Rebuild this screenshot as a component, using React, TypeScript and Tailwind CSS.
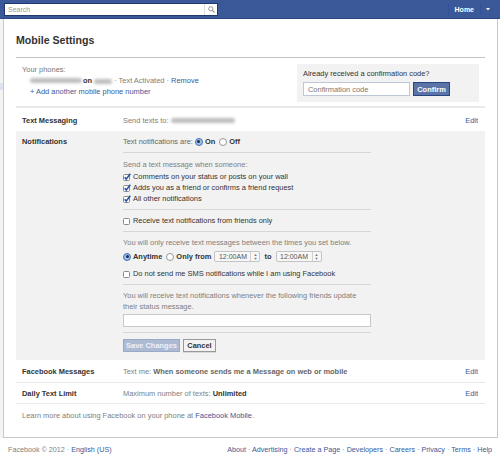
import { ReactNode } from 'react';

function Check({ checked = false }: { checked?: boolean }) {
  return (
    <svg width="8" height="8" viewBox="0 0 8 8" className="mr-[2px] shrink-0">
      <rect x="0.5" y="1.5" width="6" height="6" rx="1" fill="#fff" stroke="#8a8a8a" />
      {checked && <path d="M1.7 4.3 L3.2 6.1 L7.3 0.7" stroke="#1f4f9e" strokeWidth="1.5" fill="none" />}
    </svg>
  );
}

function Radio({ on = false }: { on?: boolean }) {
  return on ? (
    <span className="mr-[2px] flex h-[8px] w-[8px] shrink-0 items-center justify-center rounded-full border border-[#4a6fa8] bg-[#9cc0ee]">
      <span className="h-[3px] w-[3px] rounded-full bg-[#1a2c4f]" />
    </span>
  ) : (
    <span className="mr-[2px] h-[8px] w-[8px] shrink-0 rounded-full border border-[#999] bg-white" />
  );
}

// blurred-out personal info
function Blur({ w }: { w: number }) {
  return <span className="inline-block h-[5px] rounded-full bg-[#bdbdbd] align-middle blur-[1.5px]" style={{ width: w }} />;
}

function TimeSelect() {
  return (
    <span className="flex h-[11px] w-[46px] items-center rounded-[2px] border border-[#c4c4c4] bg-[#f7f7f7] text-[7px] text-[#555]">
      <span className="flex-1 text-center">12:00AM</span>
      <span className="flex h-full w-[9px] flex-col items-center justify-center border-l border-[#d0d0d0] text-[4px] leading-[4px] text-[#777]">
        <span>▲</span>
        <span>▼</span>
      </span>
    </span>
  );
}

function Row({ label, children, edit = true }: { label: string; children: ReactNode; edit?: boolean }) {
  return (
    <div className="flex pl-[6px] pr-[7px]">
      <div className="w-[101px] shrink-0 font-bold text-[#333]">{label}</div>
      <div className="flex-1 text-[#808080]">{children}</div>
      {edit && <a className="text-[#3b5998]">Edit</a>}
    </div>
  );
}

const Hr = ({ className = '' }: { className?: string }) => <div className={`h-px w-[248px] bg-[#d6d6d6] ${className}`} />;

const Dot = () => <span className="text-[#808080]">·</span>;

export default function App() {
  return (
    <div className="flex h-[459px] w-[500px] flex-col overflow-hidden bg-white font-['Liberation_Sans',Arial,sans-serif] text-[7.45px] leading-[11px] text-[#333]">
      {/* top bar */}
      <div className="flex h-[19px] shrink-0 items-center border-b border-[#2b4788] bg-[#3b5998] pl-[4px] pr-[7px]">
        <div className="flex h-[13px] w-[214px] items-center border border-[#20386e] bg-white">
          <span className="flex-1 pl-[3px] text-[7px] text-[#999]">Search</span>
          <span className="flex h-full w-[13px] items-center justify-center border-l border-[#ddd]">
            <svg width="7" height="7" viewBox="0 0 8 8">
              <circle cx="3.2" cy="3.2" r="2.4" fill="none" stroke="#888" strokeWidth="1" />
              <path d="M5 5 L7.4 7.4" stroke="#888" strokeWidth="1.2" />
            </svg>
          </span>
        </div>
        <div className="flex-1" />
        <span className="h-[11px] w-px bg-[#32509a]" />
        <span className="px-[6px] text-[7px] font-bold text-white">Home</span>
        <span className="h-[11px] w-px bg-[#32509a]" />
        <svg width="10" height="6" viewBox="0 0 10 6" className="ml-[2px]">
          <path d="M3 2 L7 2 L5 4.5 Z" fill="#fff" />
        </svg>
      </div>

      <div className="flex">
        {/* left strip */}
        <div className="flex w-[3px] shrink-0 flex-col bg-[#f4f4f4]">
          <div className="h-[64px]" />
          <div className="h-[7px] bg-[#dce3ee]" />
        </div>

        {/* main panel */}
        <div className="flex w-[495px] shrink-0 flex-col border-x border-b border-[#c9c9c9] px-[12px] pb-[16px] pt-[14px]">
          <div className="text-[10.6px] font-bold leading-[14px] text-[#333]">Mobile Settings</div>
          <div className="mt-[10px] h-px bg-[#c4c4c4]" />

          {/* phones */}
          <div className="flex justify-between pb-[4px] pt-[6px]">
            <div className="pl-[6px]">
              <div className="text-[#777]">Your phones:</div>
              <div className="flex items-center pl-[8px] text-[#808080]">
                <Blur w={52} />
                <span className="ml-[1px] font-bold text-[#333]">on</span>
                <span className="ml-[2px]"><Blur w={18} /></span>
                <span>&nbsp;· Text Activated ·&nbsp;</span>
                <a className="text-[#3b5998]">Remove</a>
              </div>
              <div className="pl-[8px] text-[#3b5998]">+ Add another mobile phone number</div>
            </div>
            <div className="mr-[6px] flex h-[38px] w-[182px] flex-col bg-[#f2f2f2] px-[6px] pt-[5px]">
              <div className="leading-[10px] text-[#333]">Already received a confirmation code?</div>
              <div className="mt-[3px] flex">
                <div className="flex h-[14px] w-[107px] items-center border border-[#bdc7d8] bg-white pl-[4px] text-[#777]">Confirmation code</div>
                <button className="ml-[3px] h-[14px] w-[37px] border border-[#29447e] bg-[#5b74a8] font-bold text-white">Confirm</button>
              </div>
            </div>
          </div>

          <div className="h-[2px] bg-[#e9e9e9]" />

          {/* text messaging */}
          <div className="pb-[5px] pt-[7px]">
            <Row label="Text Messaging">
              <span className="flex items-center">
                Send texts to:&nbsp;<Blur w={64} />
              </span>
            </Row>
          </div>

          {/* notifications, expanded */}
          <div className="flex bg-[#f2f2f2] pb-[8px] pl-[6px] pt-[5px]">
            <div className="w-[101px] shrink-0 font-bold">Notifications</div>
            <div className="flex flex-col">
              <div className="flex items-center">
                <span className="text-[#666]">Text notifications are:&nbsp;</span>
                <Radio on />
                <span className="font-bold">On</span>
                <span className="ml-[4px]" />
                <Radio />
                <span className="font-bold">Off</span>
              </div>
              <Hr className="mt-[5px]" />
              <div className="mt-[6px] text-[#808080]">Send a text message when someone:</div>
              <div className="mt-px flex items-center"><Check checked />Comments on your status or posts on your wall</div>
              <div className="flex items-center"><Check checked />Adds you as a friend or confirms a friend request</div>
              <div className="flex items-center"><Check checked />All other notifications</div>
              <Hr className="mt-[5px]" />
              <div className="mt-[5px] flex items-center"><Check />Receive text notifications from friends only</div>
              <Hr className="mt-[5px]" />
              <div className="mt-[5px] text-[#808080]">You will only receive text messages between the times you set below.</div>
              <div className="mt-[3px] flex h-[11px] items-center">
                <Radio on />
                <span className="font-bold">Anytime</span>
                <span className="ml-[4px]" />
                <Radio />
                <span className="font-bold">Only from</span>
                <span className="ml-[3px]" />
                <TimeSelect />
                <span className="mx-[4px] font-bold">to</span>
                <TimeSelect />
              </div>
              <div className="mt-[6px] flex items-center"><Check />Do not send me SMS notifications while I am using Facebook</div>
              <Hr className="mt-[5px]" />
              <div className="mt-[5px] w-[244px] text-[#808080]">You will receive text notifications whenever the following friends update their status message.</div>
              <div className="mt-[2px] h-[13px] w-[248px] border border-[#c9c9c9] bg-white" />
              <Hr className="mt-[5px]" />
              <div className="mt-[6px] flex">
                <button className="h-[13px] w-[57px] border border-[#9aa9c8] bg-[#adbad4] font-bold text-[#eef1f7]">Save Changes</button>
                <button className="ml-[3px] h-[13px] w-[33px] border border-[#999] bg-[#f2f2f2] font-bold text-[#333] shadow-[0_1px_0_rgba(0,0,0,0.1)]">Cancel</button>
              </div>
            </div>
          </div>

          <div className="border-b border-[#e9e9e9] pb-[5px] pt-[6px]">
            <Row label="Facebook Messages">
              Text me: <span className="font-bold text-[#666]">When someone sends me a Message on web or mobile</span>
            </Row>
          </div>
          <div className="border-b border-[#e9e9e9] pb-[4px] pt-[5px]">
            <Row label="Daily Text Limit">
              Maximum number of texts: <span className="font-bold text-[#333]">Unlimited</span>
            </Row>
          </div>

          <div className="mt-[6px] pl-[6px] text-[#808080]">
            Learn more about using Facebook on your phone at <a className="text-[#3b5998]">Facebook Mobile</a>.
          </div>
        </div>
      </div>

      {/* footer */}
      <div className="flex justify-between px-[8px] pt-[6px] text-[7.2px] text-[#808080]">
        <div>
          Facebook © 2012 · <a className="text-[#3b5998]">English (US)</a>
        </div>
        <div className="text-[#3b5998]">
          About <Dot /> Advertising <Dot /> Create a Page <Dot /> Developers <Dot /> Careers <Dot /> Privacy <Dot /> Terms <Dot /> Help
        </div>
      </div>
    </div>
  );
}
